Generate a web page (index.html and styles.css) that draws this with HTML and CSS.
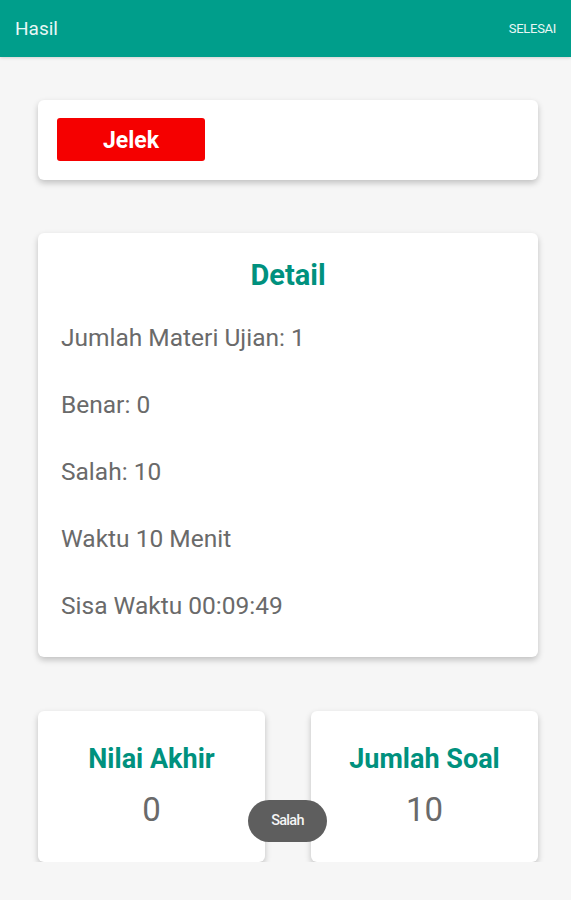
FILE: index.html
```html
<!DOCTYPE html>
<html lang="id">
<head>
    <meta charset="UTF-8">
    <meta name="viewport" content="width=device-width, initial-scale=1.0">
    <title>Hasil</title>
    <link rel="stylesheet" href="styles.css">
</head>
<body>

    <div class="toolbar">
        <span class="toolbar-title">Hasil</span>
        <span class="toolbar-action">SELESAI</span>
    </div>

    <div class="content">
        <div class="card grade-card">
            <div class="grade-badge">Jelek</div>
        </div>

        <div class="card detail-card">
            <h2 class="card-title">Detail</h2>
            <p class="detail-line">Jumlah Materi Ujian: 1</p>
            <p class="detail-line">Benar: 0</p>
            <p class="detail-line">Salah: 10</p>
            <p class="detail-line">Waktu 10 Menit</p>
            <p class="detail-line">Sisa Waktu 00:09:49</p>
        </div>

        <div class="summary-row">
            <div class="card summary-card">
                <h3 class="summary-title">Nilai Akhir</h3>
                <div class="summary-value">0</div>
            </div>
            <div class="card summary-card">
                <h3 class="summary-title">Jumlah Soal</h3>
                <div class="summary-value">10</div>
            </div>
            <!-- toast sits over the cards -->
            <div class="toast">Salah</div>
        </div>
    </div>

</body>
</html>
```

FILE: styles.css
```css
body {
    font-family: Roboto, 'Noto Sans', sans-serif;
    margin: 0;
    padding: 0;
    background: #f6f6f6;
    color: #6a6a6a;
}

.toolbar {
    height: 57px;
    background: #009e8b;
    display: flex;
    align-items: center;
    justify-content: space-between;
    padding: 0 15px;
    box-shadow: 0 1px 3px rgba(0, 0, 0, 0.15);
}

.toolbar-title {
    color: #e8f7f5;
    font-size: 19px;
}

.toolbar-action {
    color: #e8f7f5;
    font-size: 13px;
    letter-spacing: -0.3px;
}

.content {
    padding: 43px 33px 0 38px;
}

.card {
    background: #fff;
    border-radius: 6px;
    box-shadow: 0 3px 6px rgba(0, 0, 0, 0.22);
}

.grade-card {
    height: 80px;
    padding: 18px 19px;
    box-sizing: border-box;
}

.grade-badge {
    width: 148px;
    height: 43px;
    line-height: 46px;
    background: #f50000;
    color: #fff;
    font-size: 23px;
    font-weight: bold;
    text-align: center;
    border-radius: 3px;
}

.detail-card {
    margin-top: 53px;
    height: 424px;
    padding: 24px 23px 0;
    box-sizing: border-box;
}

.card-title {
    margin: 0 0 11px;
    text-align: center;
    color: #00917e;
    font-size: 29px;
    font-weight: bold;
    line-height: 36px;
}

.detail-line {
    margin: 0;
    font-size: 24.5px;
    line-height: 67px;
    height: 67px;
}

.summary-row {
    position: relative;
    margin-top: 54px;
    display: flex;
    gap: 46px;
}

.summary-card {
    flex: 1;
    height: 151px;
    text-align: center;
    padding-top: 30px;
    box-sizing: border-box;
}

.summary-title {
    margin: 0;
    color: #00917e;
    font-size: 27px;
    font-weight: bold;
    line-height: 36px;
}

.summary-value {
    font-size: 33px;
    line-height: 48px;
    margin-top: 9px;
}

.toast {
    position: absolute;
    left: 210px;
    top: 89px;
    width: 79px;
    height: 42px;
    line-height: 42px;
    border-radius: 21px;
    background: #5e5e5e;
    color: #f4f4f4;
    font-size: 14.5px;
    font-weight: 500;
    letter-spacing: -0.7px;
    text-align: center;
}
```
